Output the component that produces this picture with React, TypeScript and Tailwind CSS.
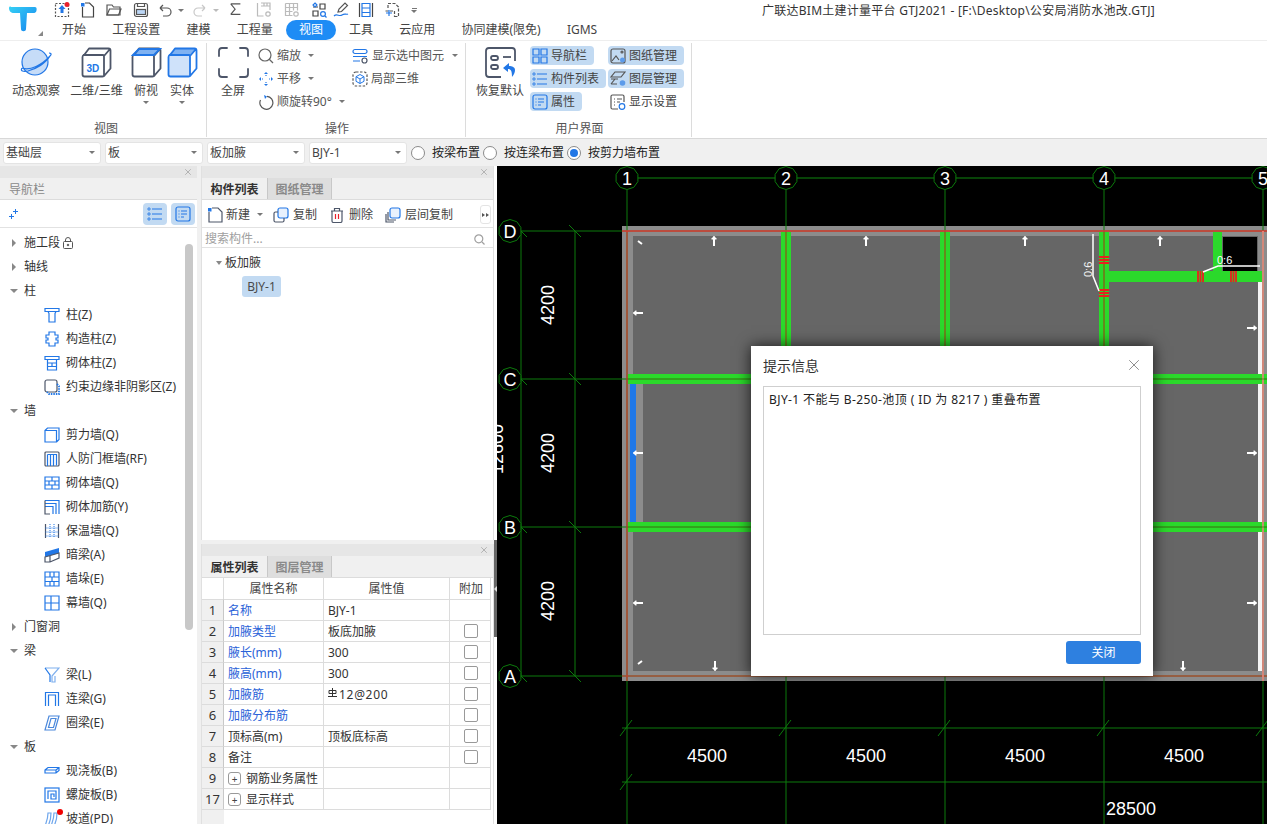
import React from 'react';
import { X } from 'lucide-react';

const BLUE = '#2277e6';
const SLATE = '#4d5669';

type IconProps = { size?: number; children: React.ReactNode; box?: number };

const Ic: React.FC<IconProps> = ({ size = 16, box = 16, children }) => (
  <svg width={size} height={size} viewBox={`0 0 ${box} ${box}`} fill="none" strokeWidth={1.2} className="shrink-0">
    {children}
  </svg>
);

const Caret: React.FC<{ className?: string }> = ({ className = '' }) => (
  <span className={`inline-block w-0 h-0 border-x-[3px] border-x-transparent border-t-[3px] border-t-[#777] ${className}`} />
);

const quickIcons: { w: number; el: React.ReactNode }[] = [
  { w: 26, el: <Ic><rect x="1.5" y="1.5" width="13" height="13" stroke="#555" strokeDasharray="2 1.5" /><path d="M8 3l3.5 4H9.5v4h-3V7H4.5z" fill={BLUE} /><circle cx="13" cy="2.5" r="2.5" fill="#e8202a" /></Ic> },
  { w: 26, el: <Ic><path d="M2.5 5v10h11V5l-4-4H5" stroke="#444" /><rect x="1" y="1" width="3.5" height="3.5" fill={BLUE} /></Ic> },
  { w: 27, el: <Ic><path d="M1 13V3h5l1.5 2H14v8z" stroke="#555" /><path d="M1 13l2.5-6H15l-2.5 6z" stroke="#555" /></Ic> },
  { w: 24, el: <Ic><rect x="1.5" y="1.5" width="13" height="13" rx="2" stroke="#555" /><rect x="3.5" y="7.5" width="9" height="5" fill="#bcd6f5" stroke="#555" /><path d="M4.5 1.5v3h7v-3" stroke="#555" /></Ic> },
  { w: 16, el: <Ic><path d="M3 6h7a4 4 0 010 8H6M3 6l3-3M3 6l3 3" stroke="#555" /></Ic> },
];

const quickIconsRest: { w: number; el: React.ReactNode }[] = [
  { w: 27, el: <Ic size={14}><path d="M2 1h11M2 13h11M2 1l5 6-5 6" stroke="#555" strokeWidth={1.3} /></Ic> },
  { w: 28, el: <Ic><path d="M1.5 1v13h6M5 1h9v7M5 4h9M8 1v3M11 1v3" stroke="#bbb" /><circle cx="12" cy="12" r="2.2" stroke="#bbb" /></Ic> },
  { w: 27, el: <Ic><path d="M1.5 1.5h12v7M1.5 1.5v12h7M1.5 5.5h12M1.5 9.5h7M5.5 1.5v12M9.5 1.5v7" stroke="#bbb" /><circle cx="12" cy="12" r="2.2" stroke="#bbb" /></Ic> },
  { w: 22, el: <Ic><path d="M9 2h5v5H9zM2 9h5v5H2zM2 5h5" stroke="#444" /><path d="M4 1l2 2-2 2-2-2z" stroke={BLUE} /><circle cx="12" cy="12" r="2.4" stroke={BLUE} /><path d="M14 14l1.5 1.5" stroke={BLUE} /></Ic> },
  { w: 25, el: <Ic><path d="M5 10l1-3 6-6 2.5 2.5-6 6z" stroke="#555" /><path d="M1 14c3-3 5 1 8-1s4 0 6-1" stroke={BLUE} /></Ic> },
  { w: 26, el: <Ic><path d="M1.5 1v14M14.5 1v14" stroke="#444" /><path d="M4 1.5h8v13H4zM4 6h8M4 10.500h8" stroke={BLUE} /></Ic> },
  { w: 27, el: <Ic><path d="M4 6V1.500h7l3.500 3.500v9.500H10M1.500 9h9v6" stroke="#555" strokeDasharray="3 1.500" /><path d="M5 8v6M2 11h6" stroke={BLUE} /></Ic> },
];

const Logo = () => (
  <svg width="30" height="30" viewBox="0 0 30 30">
    <defs>
      <linearGradient id="lg" x1="0" y1="0" x2="1" y2="1">
        <stop offset="0" stopColor="#35d0f5" />
        <stop offset="1" stopColor="#1583ee" />
      </linearGradient>
    </defs>
    <path d="M1 5c0-1 1-2 2-1h24c2 0 2 3 1 5-1 1-2 1-4 1h-5l-1 16c0 3-5 3-5 0l-1-16H6c-3 0-5-2-5-5z" fill="url(#lg)" />
  </svg>
);

const tabs = ['开始', '工程设置', '建模', '工程量', '视图', '工具', '云应用', '协同建模(限免)', 'IGMS'];

const Cube: React.FC<{ mode: '3d' | 'top' | 'solid' }> = ({ mode }) => (
  <svg width="31" height="31" viewBox="0 0 31 31" fill="none" strokeWidth={1.800}>
    {mode !== '3d' && <path d="M1.500 8L8 1.500h21.500L23 8z" fill="#7fb2f2" />}
    {mode === 'solid' && <rect x="1.500" y="8" width="21.500" height="21.500" rx="2" fill="#cfe2fa" />}
    <path
      d="M1.500 10q0-2 2-2.500L8 1.500h19.500q2 0 2 2v18l-6 7q-.5 1-2 1h-18q-2 0-2-2zM2 8h20q1 0 1 2v19M23 9l6-7"
      stroke={mode === '3d' ? SLATE : mode === 'top' ? SLATE : BLUE}
      strokeLinejoin="round"
    />
    {mode === 'top' && <path d="M2 8L8 2h21l-6 6z" stroke={BLUE} />}
    {mode === '3d' && (
      <text x="5.500" y="25" fontSize="10" fontWeight="700" fill={BLUE} fontFamily="Liberation Sans" stroke="none">3D</text>
    )}
  </svg>
);

const BigBtn: React.FC<{ w: string; label: string; caret?: boolean; children: React.ReactNode }> = ({ w, label, caret, children }) => (
  <div className={`flex flex-col items-center shrink-0 ${w}`}>
    <div className="h-[36px] flex items-center">{children}</div>
    <div className="mt-[2px] leading-[17px] whitespace-nowrap">{label}</div>
    {caret && <Caret className="mt-[2px]" />}
  </div>
);

const SmallBtn: React.FC<{ label: string; caret?: boolean; children: React.ReactNode; className?: string }> = ({ label, caret, children, className = '' }) => (
  <div className={`h-[23px] flex items-center gap-[3px] whitespace-nowrap ${className}`}>
    {children}
    <span className="text-[#555]">{label}</span>
    {caret && <Caret className="ml-[4px]" />}
  </div>
);

const ToggleBtn: React.FC<{ label: string; w: string; on?: boolean; children: React.ReactNode }> = ({ label, w, on = true, children }) => (
  <div className={`h-[19px] rounded-[4px] flex items-center gap-[3px] pl-[2px] whitespace-nowrap ${w} ${on ? 'bg-[#c2daf2]' : ''}`}>
    {children}
    <span>{label}</span>
  </div>
);

const Group: React.FC<{ w: string; label: string; labelPad: string; children: React.ReactNode; last?: boolean }> = ({ w, label, labelPad, children, last }) => (
  <div className={`flex flex-col shrink-0 h-[94px] ${w} ${last ? '' : 'border-r border-r-[#dcdcdc]'}`}>
    <div className="flex-1 flex min-h-0">{children}</div>
    <div className={`text-center leading-[16px] text-[#555] pt-[1px] ${labelPad}`}>{label}</div>
  </div>
);

const Ribbon = () => (
  <div className="h-[98px] bg-white pt-[2px] flex border-b border-b-[#d8d8d8]">
    <Group w="w-[207px]" label="视图" labelPad="pl-[6px]">
      <div className="flex pt-[1px] pl-[7px]">
        <BigBtn w="w-[58px]" label="动态观察">
          <svg width="32" height="30" viewBox="0 0 32 30" fill="none" stroke={BLUE} strokeWidth={1.200}>
            <circle cx="15" cy="15" r="13" fill="#c6dcf8" />
            <path d="M2 21c8 3 20-3 28-12 2-2 1-3-1-3M2 21c-2 3 1 4 6 3 8-2 18-8 22-15" />
          </svg>
        </BigBtn>
        <BigBtn w="w-[63px]" label="二维/三维"><Cube mode="3d" /></BigBtn>
        <BigBtn w="w-[36px]" label="俯视" caret><Cube mode="top" /></BigBtn>
        <BigBtn w="w-[36px]" label="实体" caret><Cube mode="solid" /></BigBtn>
      </div>
    </Group>
    <Group w="w-[259px]" label="操作" labelPad="pl-[2px]">
      <div className="flex pt-[1px]">
        <div className="pl-[9px]">
          <BigBtn w="w-[34px]" label="全屏">
            <svg width="31" height="31" viewBox="0 0 31 31" fill="none" stroke={SLATE} strokeWidth={1.800} strokeLinecap="round">
              <path d="M1 9V4q0-3 3-3h5M22 1h5q3 0 3 3v5M30 22v5q0 3-3 3h-5M9 30H4q-3 0-3-3v-5" />
            </svg>
          </BigBtn>
        </div>
        <div className="ml-[8px] flex flex-col w-[94px]">
          <SmallBtn label="缩放" caret>
            <Ic><circle cx="7" cy="7" r="6" stroke="#666" /><path d="M11 11l4 4" stroke="#666" /></Ic>
          </SmallBtn>
          <SmallBtn label="平移" caret>
            <Ic><path d="M8 1l2 2H6zM8 15l2-2H6zM1 8l2-2v4zM15 8l-2-2v4z" fill={BLUE} /><path d="M8 4v1M8 11v1M4 8h1M11 8h1" stroke={BLUE} /></Ic>
          </SmallBtn>
          <SmallBtn label="顺旋转90°" caret>
            <Ic><path d="M9 2.300A6.500 6.500 0 112.500 6" stroke="#555" /><path d="M6 1l3 1.500L7 5" fill={BLUE} /></Ic>
          </SmallBtn>
        </div>
        <div className="flex flex-col">
          <SmallBtn label="显示选中图元" caret className="gap-[4px]">
            <Ic><rect x="1" y="1.500" width="14" height="4" rx="2" stroke={BLUE} /><path d="M1 8.500h14M1 13h7" stroke={BLUE} /><circle cx="12.500" cy="12.500" r="2.500" stroke={SLATE} /></Ic>
          </SmallBtn>
          <SmallBtn label="局部三维">
            <Ic><rect x="1" y="1" width="14" height="14" rx="3" stroke="#555" strokeDasharray="2.500 1.500" /><path d="M8 3.500l4 2.200v4.600l-4 2.200-4-2.200V5.700zM4 5.700l4 2.300 4-2.300M8 8v4.500" stroke={BLUE} strokeWidth={1} /></Ic>
          </SmallBtn>
        </div>
      </div>
    </Group>
    <Group w="w-[226px]" label="用户界面" labelPad="pl-[2px]">
      <div className="flex pt-[1px]">
        <div className="pl-[10px]">
          <BigBtn w="w-[48px]" label="恢复默认">
            <svg width="31" height="31" viewBox="0 0 31 31" fill="none" stroke={SLATE} strokeWidth={1.800}>
              <path d="M16 30H4q-3 0-3-3V4q0-3 3-3h23q3 0 3 3v10" />
              <rect x="6" y="9" width="7" height="4" rx="2" />
              <rect x="6" y="18" width="7" height="4" rx="2" />
              <path d="M18 10h8" />
              <path d="M24 16l-6 5 5 4v-3c3 0 4 2 4 8 2-2 3-5 3-7 0-3-3-4-6-4z" fill={BLUE} stroke="none" />
            </svg>
          </BigBtn>
        </div>
        <div className="ml-[6px] flex flex-col gap-[4px] w-[78px] pt-[2px]">
          <ToggleBtn label="导航栏" w="w-[64px]">
            <Ic><path d="M1 1h6v6H1zM9 1h6v6H9zM1 9h6v6H1zM9 9h6v6H9z" stroke={BLUE} /></Ic>
          </ToggleBtn>
          <ToggleBtn label="构件列表" w="w-[76px]">
            <Ic><path d="M5 3h10M5 8h10M5 13h10" stroke={BLUE} /><path d="M1 2h2v2H1zM1 7h2v2H1zM1 12h2v2H1z" stroke={BLUE} strokeWidth={.8} /></Ic>
          </ToggleBtn>
          <ToggleBtn label="属性" w="w-[52px]">
            <Ic><rect x="1" y="1" width="14" height="14" rx="2" stroke={BLUE} /><path d="M6 5h6M6 8h6M6 11h3M3.500 5h1M3.500 8h1M3.500 11h1" stroke={BLUE} /></Ic>
          </ToggleBtn>
        </div>
        <div className="flex flex-col gap-[4px] w-[76px] pt-[2px]">
          <ToggleBtn label="图纸管理" w="w-[76px]">
            <Ic><rect x="1" y="1" width="14" height="14" rx="2" stroke="#555" /><path d="M2 13l4-5 3 4" stroke="#555" /><circle cx="12" cy="4" r="1" stroke="#555" /><circle cx="12.500" cy="12" r="2.500" fill="#5c9bea" /></Ic>
          </ToggleBtn>
          <ToggleBtn label="图层管理" w="w-[76px]">
            <Ic><path d="M5 1h10L11 6H1zM1 8h7M1 13l4-5M1 13h6" stroke="#555" /><circle cx="12.500" cy="12" r="2.800" fill="#5c9bea" /></Ic>
          </ToggleBtn>
          <ToggleBtn label="显示设置" w="w-[76px]" on={false}>
            <Ic><path d="M8 15H2.500q-1.500 0-1.500-1.500v-11Q1 1 2.500 1h10Q14 1 14 2.500V8" stroke="#555" /><path d="M4 5h1M7 5h5M4 8h1M7 8h3M4 11h1" stroke="#555" /><circle cx="12" cy="12.500" r="2.800" stroke={BLUE} /></Ic>
          </ToggleBtn>
        </div>
      </div>
    </Group>
  </div>
);

const Select: React.FC<{ label: string }> = ({ label }) => (
  <div className="w-[98px] h-[22px] bg-white rounded-[3px] border border-[#e4e4e4] flex items-center justify-between pl-[2px] pr-[5px] shrink-0">
    <span>{label}</span>
    <Caret />
  </div>
);

const Radio: React.FC<{ label: string; on?: boolean; w: string }> = ({ label, on, w }) => (
  <div className={`flex items-center shrink-0 ${w}`}>
    <span className="w-[14px] h-[14px] rounded-full border border-[#8a8a8a] bg-white flex items-center justify-center shrink-0">
      {on && <span className="w-[8px] h-[8px] rounded-full bg-[#2277e6]" />}
    </span>
    <span className="ml-[7px] text-[#222] whitespace-nowrap">{label}</span>
  </div>
);

const Toolbar = () => (
  <div className="h-[27px] bg-[#f0f0f0] flex items-center pl-[3px] gap-[4px]">
    <Select label="基础层" />
    <Select label="板" />
    <Select label="板加腋" />
    <Select label="BJY-1" />
    <div className="flex">
      <Radio label="按梁布置" w="w-[72px]" />
      <Radio label="按连梁布置" w="w-[84px]" />
      <Radio label="按剪力墙布置" on w="w-[96px]" />
    </div>
  </div>
);

const PanelStrip = () => (
  <div className="h-[12px] bg-[#e6e6e6] flex items-center justify-end pr-[4px] shrink-0">
    <X size={10} color="#a8a8a8" />
  </div>
);

type NavItem = { label: string; icon?: React.ReactNode; group?: 'open' | 'closed'; lock?: boolean; dot?: boolean };

const navItems: NavItem[] = [
  { label: '施工段', group: 'closed', lock: true },
  { label: '轴线', group: 'closed' },
  { label: '柱', group: 'open' },
  { label: '柱(Z)', icon: <Ic><path d="M1 1.500h14v3H1zM4 4.500l1 2v8.500h6V6.500l1-2" stroke={BLUE} /></Ic> },
  { label: '构造柱(Z)', icon: <Ic><path d="M5 1h6v3h3v3h-2v2h2v3h-3v3H5v-3H2V9h2V7H2V4h3z" stroke={BLUE} /></Ic> },
  { label: '砌体柱(Z)', icon: <Ic><path d="M1 1.500h14v3H1zM3.500 4.500v10.500h9V4.500M3.500 8h9M3.500 11.500h9M8 8v3.500" stroke={BLUE} /></Ic> },
  { label: '约束边缘非阴影区(Z)', icon: <Ic><rect x="1" y="1" width="12" height="12" rx="2" stroke={SLATE} /><path d="M13 5l2 2v8H5l-2-2" stroke={BLUE} strokeDasharray="1.500 1" strokeWidth={1.800} /></Ic> },
  { label: '墙', group: 'open' },
  { label: '剪力墙(Q)', icon: <Ic><path d="M1 3.500h11.500V15H1zM1 3.500L3.500 1H15v11.500l-2.500 2.500" stroke={BLUE} /></Ic> },
  { label: '人防门框墙(RF)', icon: <Ic><rect x="1" y="1" width="14" height="14" rx="1" stroke={SLATE} /><path d="M3.500 3.500h9v11M3.500 3.500V15M6.500 3.500V15M9.500 3.500V15" stroke={BLUE} /></Ic> },
  { label: '砌体墙(Q)', icon: <Ic><path d="M1 2h14v12H1zM1 6h14M1 10h14M8 2v4M5 6v4M11 6v4M8 10v4" stroke={BLUE} /></Ic> },
  { label: '砌体加筋(Y)', icon: <Ic><path d="M1 1.500h14V15M1 4.500h11V15M1 7.500h8V15" stroke={BLUE} /><path d="M1 1.500V15h5" stroke={SLATE} /></Ic> },
  { label: '保温墙(Q)', icon: <Ic><path d="M1.500 1v14M14.500 1v14" stroke={SLATE} /><path d="M6 1v14M10 1v14M1.500 5h13M1.500 9h13M1.500 13h13" stroke={BLUE} strokeDasharray="1 1" strokeWidth={1} /></Ic> },
  { label: '暗梁(A)', icon: <Ic><path d="M1 5l14-4v5L1 10z" fill={BLUE} /><path d="M1 10l14-4v5l-9 4H1zM6 9v6" stroke={SLATE} /></Ic> },
  { label: '墙垛(E)', icon: <Ic><path d="M1 1h14v14H1zM1 6h14M1 10.500h14M6 1v5M10 1v5M8 6v4.500M6 10.500V15M10 10.500V15" stroke={BLUE} /></Ic> },
  { label: '幕墙(Q)', icon: <Ic><path d="M1 1h14v14H1zM1 8h14M7 1v14M7 8h8" stroke={BLUE} /></Ic> },
  { label: '门窗洞', group: 'closed' },
  { label: '梁', group: 'open' },
  { label: '梁(L)', icon: <Ic><path d="M1 1h14L8 9v6h3V9" stroke="#7fb0ee" /><path d="M1 1l5 7v7" stroke={BLUE} /></Ic> },
  { label: '连梁(G)', icon: <Ic><path d="M1.500 15V1.500h13V15M4.500 15V4h7v11" stroke={BLUE} /></Ic> },
  { label: '圈梁(E)', icon: <Ic><path d="M5 1h10L11 15H1zM7 3.500h5L9.500 12.500h-5z" stroke="#4a88dc" /></Ic> },
  { label: '板', group: 'open' },
  { label: '现浇板(B)', icon: <Ic><path d="M1 7l3-2.500h11v3l-3 2.500H1zM1 7h11v3M12 7l3-2.500" stroke={BLUE} /></Ic> },
  { label: '螺旋板(B)', icon: <Ic><rect x="1" y="1" width="14" height="14" stroke={BLUE} /><path d="M4 12V4h8v8H7V7h3v3" stroke={BLUE} /></Ic> },
  { label: '坡道(PD)', dot: true, icon: <Ic><path d="M1 15C3 10 4 6 4 2h3c0 4-1 9-3 13M7 15c2-5 3-9 3-13h3c0 4-1 9-3 13" stroke="#6ea6ec" /></Ic> },
];

const NavRow: React.FC<{ item: NavItem }> = ({ item }) => {
  if (item.group) {
    return (
      <div className="h-[24px] flex items-center shrink-0 text-[#333]">
        <span className="w-[24px] flex justify-center pl-[3px]">
          {item.group === 'closed' ? (
            <span className="w-0 h-0 border-y-[4px] border-y-transparent border-l-[4px] border-l-[#888]" />
          ) : (
            <span className="w-0 h-0 border-x-[4px] border-x-transparent border-t-[4px] border-t-[#888]" />
          )}
        </span>
        <span>{item.label}</span>
        {item.lock && (
          <svg width="10" height="12" viewBox="0 0 10 12" fill="none" stroke="#555" className="ml-[3px]">
            <rect x=".5" y="4.500" width="9" height="7" rx="1" />
            <path d="M2.500 4.500V3a2.500 2.500 0 015 0v1.500" />
            <circle cx="5" cy="8" r=".8" fill="#555" />
          </svg>
        )}
      </div>
    );
  }
  return (
    <div className="h-[24px] flex items-center shrink-0 pl-[44px] text-[#333] whitespace-nowrap">
      <span className="relative flex">
        {item.icon}
        {item.dot && <span className="absolute -top-[2px] right-[-3px] w-[6px] h-[6px] rounded-full bg-[#f00000]" />}
      </span>
      <span className="ml-[6px]">{item.label}</span>
    </div>
  );
};

const NavPanel = () => (
  <div className="w-[197px] shrink-0 bg-white flex flex-col overflow-hidden">
    <PanelStrip />
    <div className="h-[22px] bg-[#f0f0f0] flex items-center pl-[9px] pt-[2px] text-[#8a8a8a] shrink-0 border-b border-b-[#dcdcdc]">导航栏</div>
    <div className="h-[28px] flex items-center shrink-0 border-b border-b-[#e2e2e2] pl-[9px] pr-[2px]">
      <svg width="10" height="10" viewBox="0 0 10 10" stroke={BLUE} fill="none">
        <path d="M6.500 0v5M4 2.500h5M2.500 5v5M0 7.500h5" />
      </svg>
      <div className="ml-auto flex gap-[4px]">
        <div className="w-[24px] h-[22px] rounded-[4px] bg-[#c2daf2] flex items-center justify-center">
          <Ic><path d="M5 3h10M5 8h10M5 13h10" stroke={BLUE} /><path d="M1 2h2v2H1zM1 7h2v2H1zM1 12h2v2H1z" stroke={BLUE} strokeWidth={.8} /></Ic>
        </div>
        <div className="w-[24px] h-[22px] rounded-[4px] bg-[#c2daf2] flex items-center justify-center">
          <Ic><rect x="1" y="1" width="14" height="14" rx="2" stroke={BLUE} /><path d="M6 5h6M6 8h6M6 11h3M3.500 5h1M3.500 8h1M3.500 11h1" stroke={BLUE} /></Ic>
        </div>
      </div>
    </div>
    <div className="relative flex-1 min-h-0 pt-[3px] flex flex-col overflow-hidden">
      {navItems.map((item, index) => (
        <NavRow key={index} item={item} />
      ))}
      <div className="absolute right-[4px] top-[16px] w-[8px] h-[386px] rounded-[4px] bg-[#c8c8c8]" />
    </div>
  </div>
);

const PanelTabs: React.FC<{ active: string; other: string }> = ({ active, other }) => (
  <div className="h-[22px] flex shrink-0 bg-[#f0f0f0] border-b border-b-[#dcdcdc]">
    <div className="w-[65px] flex items-center justify-center pt-[2px] font-bold text-[#333]">{active}</div>
    <div className="w-[65px] flex items-center justify-center pt-[2px] bg-[#dedede] text-[#8a8a8a] border-x border-x-[#c8c8c8] font-bold">{other}</div>
  </div>
);

const ListTools = () => (
  <div className="h-[28px] flex items-center shrink-0 border-b border-b-[#e2e2e2] pl-[5px] pt-[2px]">
    <Ic><path d="M2 5v10h13V5L11 1H5" stroke={SLATE} /><rect x="1" y="1" width="3.500" height="3.500" fill={BLUE} /></Ic>
    <span className="ml-[3px]">新建</span>
    <Caret className="ml-[7px]" />
    <span className="ml-[10px]"><Ic><rect x="5" y="1" width="10" height="10" rx="2" stroke={BLUE} fill="#e8f1fd" /><path d="M5 5H2.500Q1 5 1 6.500v7Q1 15 2.500 15h7q1.500 0 1.500-1.500V11" stroke={SLATE} /></Ic></span>
    <span className="ml-[4px]">复制</span>
    <span className="ml-[12px]"><Ic><path d="M2 4h12M5.500 4V1.500h5V4M3 4v10q0 1.500 1.500 1.500h7Q13 15.500 13 14V4" stroke={SLATE} /><path d="M6.500 7v5M9.500 7v5" stroke="#e8202a" /></Ic></span>
    <span className="ml-[4px]">删除</span>
    <span className="ml-[12px]"><Ic><rect x="5" y="1" width="10" height="10" rx="2" stroke={BLUE} fill="#e8f1fd" /><path d="M3 5v8h8M1 7v8h8" stroke={SLATE} /></Ic></span>
    <span className="ml-[4px]">层间复制</span>
    <div className="ml-auto mr-[2px] w-[11px] h-[19px] border border-[#e4e4e4] rounded-[3px] flex items-center justify-center gap-px">
      <span className="w-0 h-0 border-y-[2.5px] border-y-transparent border-l-[3px] border-l-[#555]" />
      <span className="w-0 h-0 border-y-[2.5px] border-y-transparent border-l-[3px] border-l-[#555]" />
    </div>
  </div>
);

type PropRow = { n: string; name: string; value?: string; link?: boolean; check?: boolean; expand?: boolean; rebar?: boolean };

const propRows: PropRow[] = [
  { n: '1', name: '名称', value: 'BJY-1', link: true },
  { n: '2', name: '加腋类型', value: '板底加腋', link: true, check: true },
  { n: '3', name: '腋长(mm)', value: '300', link: true, check: true },
  { n: '4', name: '腋高(mm)', value: '300', link: true, check: true },
  { n: '5', name: '加腋筋', value: '12@200', link: true, check: true, rebar: true },
  { n: '6', name: '加腋分布筋', link: true, check: true },
  { n: '7', name: '顶标高(m)', value: '顶板底标高', check: true },
  { n: '8', name: '备注', check: true },
  { n: '9', name: '钢筋业务属性', expand: true },
  { n: '17', name: '显示样式', expand: true },
];

// grade mark drawn in front of a rebar spec
const RebarMark = () => (
  <svg width="9" height="9" viewBox="0 0 9 9" fill="none" stroke="#333" className="mr-[2px] mb-[4px] shrink-0">
    <path d="M1 2.500h7v3H1zM4.500 0v8M0 8.500h9" />
  </svg>
);

const PropTable = () => (
  <div className="flex-1 min-h-0 flex flex-col">
    <div className="grid grid-cols-[22px_100px_126px_41px] auto-rows-[21px] w-[289px] border-b border-b-[#dcdcdc] border-r border-r-[#dcdcdc]">
      <div className="bg-white border-r border-r-[#dcdcdc]" />
      <div className="border-r border-r-[#dcdcdc] flex items-center justify-center pt-[1px] text-[#444]">属性名称</div>
      <div className="border-r border-r-[#dcdcdc] flex items-center justify-center pt-[1px] text-[#444]">属性值</div>
      <div className="flex items-center justify-center pt-[1px] pl-[1px] text-[#444]">附加</div>
      {propRows.map((row) => (
        <React.Fragment key={row.n}>
          <div className="bg-[#f0f0f0] border-t border-t-[#dcdcdc] border-r border-r-[#c8c8c8] flex items-center justify-center pt-[1px] text-[#333] text-[13px]">{row.n}</div>
          <div className={`border-t border-t-[#dcdcdc] border-r border-r-[#dcdcdc] flex items-center pl-[4px] pt-[1px] whitespace-nowrap ${row.link ? 'text-[#2a62d8]' : 'text-[#333]'}`}>
            {row.expand && (
              <span className="w-[13px] h-[13px] rounded-[3px] border border-[#999] flex items-center justify-center mr-[5px] text-[10px] leading-none text-[#444]">+</span>
            )}
            {row.name}
          </div>
          <div className="border-t border-t-[#dcdcdc] border-r border-r-[#dcdcdc] flex items-center pl-[4px] pt-[1px] text-[#333]">
            {row.rebar && <RebarMark />}
            <span className={row.rebar ? 'tracking-[0.7px]' : ''}>{row.value}</span>
          </div>
          <div className="border-t border-t-[#dcdcdc] flex items-center justify-center">
            {row.check && <span className="w-[14px] h-[14px] rounded-[2px] border border-[#999] bg-white" />}
          </div>
        </React.Fragment>
      ))}
    </div>
    <div className="flex-1 w-[22px] bg-[#f0f0f0]" />
  </div>
);

const MidPanel = () => (
  <div className="w-[293px] shrink-0 ml-[4px] flex flex-col bg-[#f0f0f0]">
    <div className="h-[374px] flex flex-col bg-white border-x border-x-[#e0e0e0] shrink-0">
      <PanelStrip />
      <PanelTabs active="构件列表" other="图纸管理" />
      <ListTools />
      <div className="h-[20px] flex items-center justify-between pl-[3px] pr-[8px] pt-[3px] shrink-0 border-b border-b-[#e2e2e2] text-[#a0a0a0]">
        <span>搜索构件...</span>
        <svg width="11" height="11" viewBox="0 0 11 11" fill="none" stroke="#a0a0a0" strokeWidth={1.200}>
          <circle cx="4.800" cy="4.800" r="4" />
          <path d="M8 8l2.500 2.500" />
        </svg>
      </div>
      <div className="flex items-center h-[24px] mt-[3px] pl-[14px] text-[#333]">
        <span className="w-0 h-0 border-x-[3px] border-x-transparent border-t-[4px] border-t-[#888] mr-[3px]" />
        板加腋
      </div>
      <div className="pl-[40px] mt-[1px]">
        <span className="inline-flex h-[21px] w-[39px] items-center justify-center rounded-[3px] bg-[#c2daf2] text-[#4a4a4a]">BJY-1</span>
      </div>
    </div>
    <div className="h-[4px] shrink-0" />
    <div className="flex-1 min-h-0 flex flex-col bg-white border-x border-x-[#e0e0e0]">
      <PanelStrip />
      <PanelTabs active="属性列表" other="图层管理" />
      <PropTable />
    </div>
  </div>
);

const axisX = [627, 786, 945, 1104, 1263];
const axisY = [231, 379, 527, 676];
const axisLabelsY = ['D', 'C', 'B', 'A'];
const GREEN = '#0c7a0c';
const BEAM = '#2bd92b';

const octagon = (cx: number, cy: number, r: number) =>
  Array.from({ length: 10 }, (_, i) => {
    const a = ((i + 0.5) * Math.PI) / 5;
    return `${(cx + r * Math.cos(a)).toFixed(1)},${(cy + r * Math.sin(a)).toFixed(1)}`;
  }).join(' ');

const Arrow: React.FC<{ x: number; y: number; rot: number }> = ({ x, y, rot }) => (
  <g transform={`translate(${x} ${y}) rotate(${rot})`}>
    <path d="M0 -4.500V5" stroke="#fff" strokeWidth={2} />
    <path d="M-2.500 -2.500L0 -5L2.500 -2.500V-1.500H-2.500z" fill="#fff" />
  </g>
);

const DrawingCanvas = () => (
  <svg viewBox="497 166 770 658" className="absolute inset-0 w-full h-full" fontFamily="Liberation Sans">
    <rect x="497" y="166" width="770" height="658" fill="#000" />
    <rect x="622" y="226" width="645" height="455" fill="#8c8c8c" />
    <rect x="633" y="236" width="625" height="435" fill="#666" />
    <rect x="1258" y="275" width="4" height="396" fill="#f4f4f4" />
    <rect x="630" y="384" width="6" height="138" fill="#1f78e8" />
    <rect x="636" y="384" width="7" height="138" fill="#8c8c8c" />
    {/* beams */}
    {[786, 945, 1104].map((x) => (
      <rect key={x} x={x - 5} y="232" width="10" height="147" fill={BEAM} />
    ))}
    <rect x="628" y="374" width="639" height="10" fill={BEAM} />
    <rect x="628" y="522" width="639" height="10" fill={BEAM} />
    <rect x="1109" y="271" width="153" height="11" fill={BEAM} />
    <rect x="1213" y="232" width="9" height="40" fill={BEAM} />
    <rect x="1223" y="237" width="34" height="34" fill="#000" />
    {/* axes */}
    <path d="M627 190V824M786 190V824M945 190V824M1104 190V824M1263 190V824" stroke={GREEN} strokeWidth={1} />
    <path d="M521 231H1267M521 379H1267M521 527H1267M521 676H1267" stroke={GREEN} strokeWidth={1} />
    <path d="M627 178H1267" stroke="#0a5a0a" strokeWidth={1.500} />
    <path d="M521 231V676M575 231V676" stroke={GREEN} />
    <path d="M622 728H1267M622 782H1267" stroke={GREEN} />
    <path d="M620 736l12-16M779 736l12-16M938 736l12-16M1097 736l12-16M1256 736l12-16M620 790l12-16" stroke={GREEN} />
    {axisY.map((y) => (
      <path key={y} d={`M515 ${y - 6}l12 12M569 ${y - 6}l12 12`} stroke={GREEN} />
    ))}
    {/* red outline, over axes */}
    <path d="M622 231H1267" stroke="#e03a3a" strokeWidth={1.500} />
    <path d="M627 231V681" stroke="#ee2a2a" strokeWidth={1} />
    <path d="M622 676H1267" stroke="#e03a3a" />
    <path d="M1263 231V681" stroke="#ff8a8a" strokeWidth={1.500} />
    <path d="M628 379H1267M628 527H1267" stroke="#4a9a20" />
    <path d="M786 232V374M945 232V374M1104 232V374" stroke="#b06a20" />
    {/* red ticks */}
    {[256, 289].map((y) => (
      <path key={y} d={`M1099 ${y + 1}h10M1099 ${y + 4}h10M1099 ${y + 7}h10`} stroke="#e82020" strokeWidth={2} />
    ))}
    {[1197, 1230].map((x) => (
      <path key={x} d={`M${x + 1} 271v11M${x + 3.500} 271v11M${x + 6} 271v11`} stroke="#e82020" strokeWidth={1.800} />
    ))}
    {/* leader lines */}
    <path d="M1093 234V276L1099 291" stroke="#fff" strokeWidth={1.500} fill="none" />
    <path d="M1203 272L1218 266H1260" stroke="#fff" strokeWidth={1.500} fill="none" />
    <text x="1217" y="264" fill="#fff" fontSize="11">0:6</text>
    <text transform="translate(1092 277) rotate(-90)" fill="#fff" fontSize="11" opacity="0.9">0:6</text>
    {/* arrows */}
    {[714, 866, 1025, 1160].map((x) => (
      <Arrow key={x} x={x} y={241} rot={0} />
    ))}
    {[
      [638, 313],
      [638, 453],
      [638, 603],
    ].map(([x, y]) => (
      <Arrow key={y} x={x} y={y} rot={-90} />
    ))}
    {[
      [1252, 328],
      [1252, 453],
      [1252, 603],
    ].map(([x, y]) => (
      <Arrow key={y} x={x} y={y} rot={90} />
    ))}
    <Arrow x={715} y={666} rot={180} />
    <Arrow x={1183} y={666} rot={180} />
    <path d="M638 241l4 3M638 664l4-3" stroke="#fff" strokeWidth={2} />
    {/* axis bubbles */}
    {axisX.map((x, i) => (
      <g key={x}>
        <polygon points={octagon(x, 178, 11.500)} fill="#000" stroke={GREEN} />
        <text x={x} y={185} fill="#fff" fontSize="18" textAnchor="middle">{i + 1}</text>
      </g>
    ))}
    {axisY.map((y, i) => (
      <g key={y}>
        <polygon points={octagon(510, y, 11.500)} fill="#000" stroke={GREEN} />
        <text x={510} y={y + 7} fill="#fff" fontSize="18" textAnchor="middle">{axisLabelsY[i]}</text>
      </g>
    ))}
    {/* dims */}
    {[305, 453, 601].map((y) => (
      <text key={y} transform={`translate(554 ${y}) rotate(-90)`} fill="#fff" fontSize="18" textAnchor="middle">4200</text>
    ))}
    <text transform="translate(503 449) rotate(-90)" fill="#fff" fontSize="18" textAnchor="middle">12600</text>
    {[707, 866, 1025, 1184].map((x) => (
      <text key={x} x={x} y={762} fill="#fff" fontSize="18" textAnchor="middle">4500</text>
    ))}
    <text x="1131" y="815" fill="#fff" fontSize="18" textAnchor="middle">28500</text>
  </svg>
);

const Dialog = () => (
  <div className="absolute left-[254px] top-[180px] w-[402px] h-[330px] bg-white shadow-[0_0_14px_rgba(0,0,0,0.75)] flex flex-col px-[12px]">
    <div className="h-[40px] flex items-center justify-between shrink-0 pb-[2px]">
      <span className="text-[14px] text-[#333]">提示信息</span>
      <X size={18} color="#777" strokeWidth={1.100} className="mr-[-2px]" />
    </div>
    <div className="h-[249px] border border-[#cfcfcf] pl-[5px] pt-[4px] text-[#222] shrink-0 tracking-[0.4px]">
      BJY-1 不能与 B-250-池顶 ( ID 为 8217 ) 重叠布置
    </div>
    <div className="flex justify-end mt-[6px]">
      <div className="w-[75px] h-[23px] rounded-[3px] bg-[#2e80e0] text-white flex items-center justify-center">关闭</div>
    </div>
  </div>
);

const App: React.FC = () => (
  <div className="w-[1267px] h-[824px] overflow-hidden flex flex-col bg-[#f0f0f0] text-[12px] text-[#444] [font-family:'Noto_Sans','Noto_Sans_CJK_SC',sans-serif]">
    <div className="h-[41px] bg-white flex shrink-0 border-b border-b-[#eeeeee]">
      <div className="w-[49px] shrink-0 pl-[8px] pt-[3px] relative">
        <Logo />
        <span className="absolute left-[38px] top-[31px] w-0 h-0 border-b-[5px] border-b-[#888] border-l-[5px] border-l-transparent" />
      </div>
      <div className="flex-1 flex flex-col min-w-0">
        <div className="h-[20px] flex items-center pr-[112px]">
          <div className="flex items-center pl-[5px]">
            {quickIcons.map((q, i) => (
              <span key={i} className="flex" style={{ width: q.w }}>{q.el}</span>
            ))}
            <Caret className="ml-[5px]" />
            <span className="ml-[8px] flex">
              <Ic><path d="M13 6H6a4 4 0 000 8h4M13 6l-3-3M13 6l-3 3" stroke="#c8c8c8" /></Ic>
            </span>
            <Caret className="ml-[5px] mr-[10px] border-t-[#bbb]" />
            {quickIconsRest.map((q, i) => (
              <span key={i} className="flex" style={{ width: q.w }}>{q.el}</span>
            ))}
            <div className="flex flex-col items-center gap-[1px]">
              <span className="w-[5px] h-px bg-[#777]" />
              <Caret />
            </div>
          </div>
          <div className="ml-auto pt-[2px] text-[#333] whitespace-nowrap tracking-[0.25px]">广联达BIM土建计量平台 GTJ2021 - [F:\Desktop\公安局消防水池改.GTJ]</div>
        </div>
        <div className="flex-1 flex items-end">
          {tabs.map((t) => (
            <div
              key={t}
              className={`h-[20px] px-[13.1px] flex items-center whitespace-nowrap ${t === '视图' ? 'rounded-[10px] bg-[#1e8cf5] text-white' : 'text-[#444]'}`}
            >
              {t}
            </div>
          ))}
        </div>
      </div>
    </div>
    <Ribbon />
    <Toolbar />
    <div className="flex-1 min-h-0 flex">
      <NavPanel />
      <MidPanel />
      <div className="relative w-[3px] shrink-0 bg-white">
        <div className="absolute left-0 top-[374px] w-[3px] h-[97px] bg-[#666] flex items-center">
          <span className="w-0 h-0 border-y-[3px] border-y-transparent border-r-[3px] border-r-[#ddd]" />
        </div>
      </div>
      <div className="relative flex-1 min-w-0 overflow-hidden">
        <DrawingCanvas />
        <Dialog />
      </div>
    </div>
  </div>
);

export default App;
